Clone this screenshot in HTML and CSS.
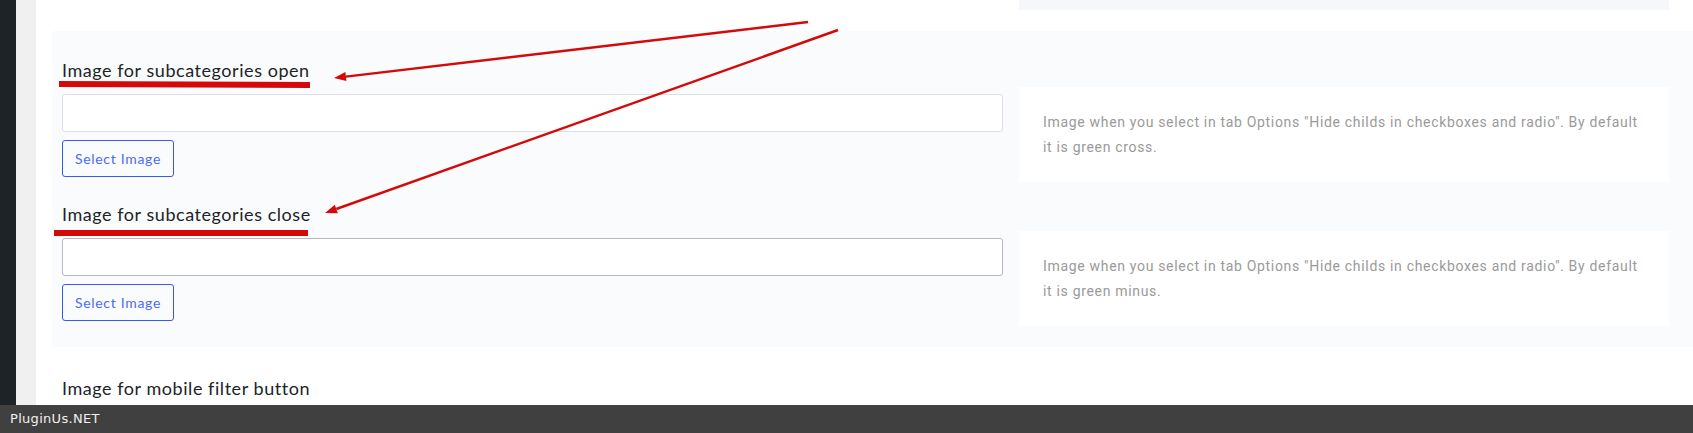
FILE: index.html
```html
<!DOCTYPE html>
<html lang="en">
<head>
<meta charset="utf-8">
<title>Settings</title>
<link rel="stylesheet" href="styles.css">
</head>
<body>
<div class="page">
  <aside class="sidebar"></aside>
  <div class="strip"></div>
  <main class="content">
    <div class="prev-card"></div>
    <section class="section">
      <div class="row">
        <div class="field">
          <h4 class="field-title">Image for subcategories open</h4>
          <input class="field-input" type="text">
          <button class="btn">Select Image</button>
        </div>
        <div class="desc">Image when you select in tab Options "Hide childs in checkboxes and radio". By default it is green cross.</div>
      </div>
      <div class="row">
        <div class="field">
          <h4 class="field-title">Image for subcategories close</h4>
          <input class="field-input field-input--active" type="text">
          <button class="btn">Select Image</button>
        </div>
        <div class="desc">Image when you select in tab Options "Hide childs in checkboxes and radio". By default it is green minus.</div>
      </div>
    </section>
    <h4 class="field-title field-title--outside">Image for mobile filter button</h4>
  </main>
</div>
<svg class="annot" width="1693" height="433" viewBox="0 0 1693 433">
  <polygon points="59,81 310,82 310,88 59,87" fill="#d40a0a"/>
  <polygon points="54,230 308,230 308,236 54,236" fill="#d40a0a"/>
  <line x1="808" y1="22" x2="345.9" y2="76.6" stroke="#d40a0a" stroke-width="2.4"/>
  <polygon points="334,78 346.4,81.1 345.4,72.1" fill="#d40a0a"/>
  <line x1="838" y1="30" x2="336.3" y2="209" stroke="#d40a0a" stroke-width="2.4"/>
  <polygon points="325,213 337.8,213.2 334.8,204.7" fill="#d40a0a"/>
</svg>
<footer class="footer">PluginUs.NET</footer>
</body>
</html>
```
FILE: styles.css
```css
html, body {
  margin: 0;
  padding: 0;
}
body {
  width: 1693px;
  height: 433px;
  overflow: hidden;
  position: relative;
  background: #ffffff;
  font-family: "Lato", "Noto Sans", sans-serif;
}
.page {
  display: flex;
  height: 433px;
}
.sidebar {
  width: 16px;
  flex: none;
  background: #1d2327;
}
.strip {
  width: 20px;
  flex: none;
  background: #f0f0f1;
}
.content {
  flex: 1;
  background: #ffffff;
  padding-left: 16px;
}
.prev-card {
  margin-left: 967px;
  width: 650px;
  height: 10px;
  background: #f6f7fb;
}
.section {
  margin-top: 21px;
  background: #fafbfd;
  padding: 27px 24px 21px 10px;
  display: flex;
  flex-direction: column;
  gap: 20px;
}
.row {
  display: flex;
  align-items: flex-start;
  gap: 16px;
  height: 124px;
}
.field {
  width: 941px;
  flex: none;
  display: flex;
  flex-direction: column;
  align-items: flex-start;
}
.field-title {
  margin: 0;
  font-size: 18px;
  line-height: 24px;
  font-weight: 400;
  letter-spacing: 0.55px;
  color: #1d2327;
}
.field-title--outside {
  margin: 29px 0 0 10px;
}
.field-input {
  box-sizing: border-box;
  margin: 12px 0 0 0;
  width: 941px;
  height: 38px;
  border: 1px solid #dcdfe6;
  border-radius: 3px;
  background: #ffffff;
  padding: 0 8px;
  outline: none;
}
.field-input--active {
  border-color: #b5b9bf;
}
.btn {
  box-sizing: border-box;
  margin-top: 8px;
  height: 37px;
  width: 112px;
  padding: 0;
  border: 1px solid #3858e9;
  border-radius: 3px;
  background: transparent;
  color: #4a6cf0;
  font-family: "Lato", "Noto Sans", sans-serif;
  font-size: 14px;
  letter-spacing: 0.7px;
}
.desc {
  box-sizing: border-box;
  margin-top: 29px;
  width: 650px;
  height: 95px;
  flex: none;
  background: #ffffff;
  padding: 23px 24px 0 24px;
  font-family: "Roboto", "Noto Sans", sans-serif;
  font-size: 14px;
  letter-spacing: 0.68px;
  line-height: 25px;
  color: #9a9a9a;
}
.annot {
  position: absolute;
  top: 0;
  left: 0;
  pointer-events: none;
}
.footer {
  position: absolute;
  left: 0;
  right: 0;
  bottom: 0;
  height: 28px;
  box-sizing: border-box;
  padding-left: 10px;
  background: #404040;
  color: #f0f0f0;
  font-family: "DejaVu Sans", sans-serif;
  font-size: 13px;
  letter-spacing: 0.3px;
  line-height: 28px;
}
```
